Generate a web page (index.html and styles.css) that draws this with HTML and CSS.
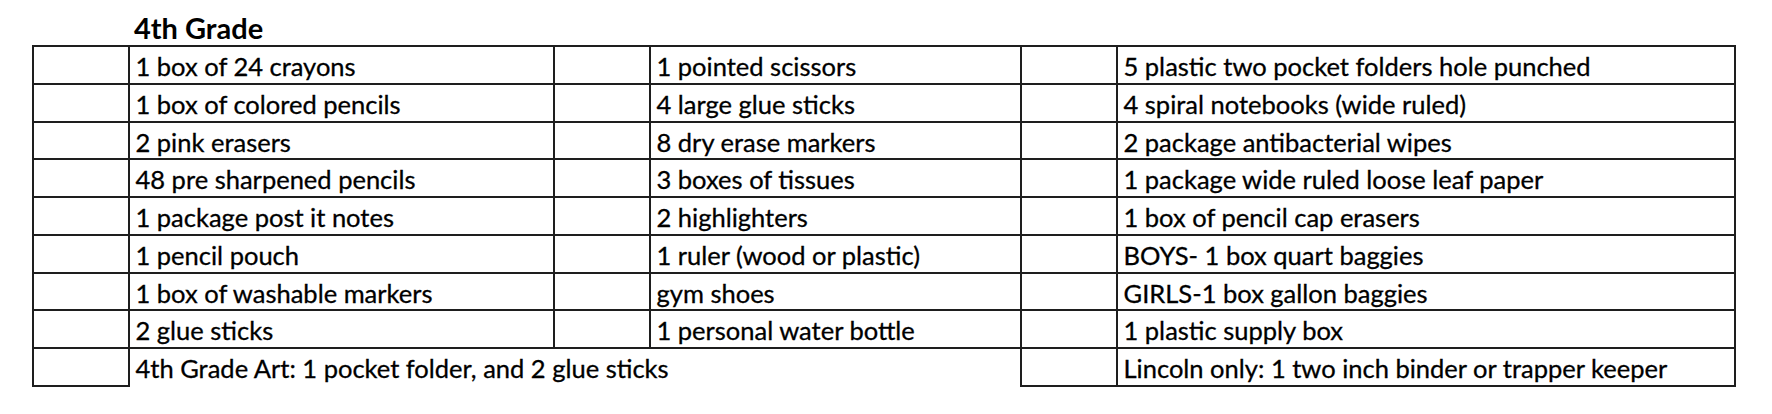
FILE: index.html
```html
<!DOCTYPE html>
<html lang="en">
<head>
<meta charset="utf-8">
<title>4th Grade Supply List</title>
<link rel="stylesheet" href="styles.css">
</head>
<body>
<div class="page">
  <div class="title">4th Grade</div>
  <table class="supplies">
    <colgroup>
      <col class="c-box"><col class="c-a"><col class="c-box"><col class="c-b"><col class="c-box"><col class="c-c">
    </colgroup>
    <tbody>
      <tr><td></td><td>1 box of 24 crayons</td><td></td><td>1 pointed scissors</td><td></td><td>5 plastic two pocket folders hole punched</td></tr>
      <tr><td></td><td>1 box of colored pencils</td><td></td><td>4 large glue sticks</td><td></td><td>4 spiral notebooks (wide ruled)</td></tr>
      <tr><td></td><td>2 pink erasers</td><td></td><td>8 dry erase markers</td><td></td><td>2 package antibacterial wipes</td></tr>
      <tr><td></td><td>48 pre sharpened pencils</td><td></td><td>3 boxes of tissues</td><td></td><td>1 package wide ruled loose leaf paper</td></tr>
      <tr><td></td><td>1 package post it notes</td><td></td><td>2 highlighters</td><td></td><td>1 box of pencil cap erasers</td></tr>
      <tr><td></td><td>1 pencil pouch</td><td></td><td>1 ruler (wood or plastic)</td><td></td><td>BOYS- 1 box quart baggies</td></tr>
      <tr><td></td><td>1 box of washable markers</td><td></td><td>gym shoes</td><td></td><td>GIRLS-1 box gallon baggies</td></tr>
      <tr><td></td><td>2 glue sticks</td><td></td><td>1 personal water bottle</td><td></td><td>1 plastic supply box</td></tr>
      <tr><td></td><td class="open" colspan="3">4th Grade Art: 1 pocket folder, and 2 glue sticks</td><td></td><td>Lincoln only: 1 two inch binder or trapper keeper</td></tr>
    </tbody>
  </table>
</div>
</body>
</html>
```
FILE: styles.css
```css
html, body {
  margin: 0;
  padding: 0;
  background: #ffffff;
}

body {
  font-family: Lato, "Liberation Sans", sans-serif;
  color: #000000;
}

.page {
  padding-left: 32px;
}

.title {
  box-sizing: border-box;
  height: 45px;
  padding-top: 11px;
  padding-left: 102px;
  font-size: 29px;
  line-height: 34px;
  font-weight: 700;
}

.supplies {
  border-collapse: collapse;
  table-layout: fixed;
  width: 1702px;
}

.c-box { width: 95.5px; }
.c-a { width: 425.5px; }
.c-b { width: 371.5px; }
.c-c { width: 618px; }

.supplies tr {
  height: 37.75px;
}

.supplies td {
  border: 2px solid #1e1e1e;
  padding: 4px 0 0 6px;
  font-size: 25.5px;
  line-height: 30px;
  vertical-align: top;
  white-space: nowrap;
  overflow: hidden;
  -webkit-text-stroke: 0.3px #000000;
}

.supplies td.open {
  border-bottom: none;
}
```
